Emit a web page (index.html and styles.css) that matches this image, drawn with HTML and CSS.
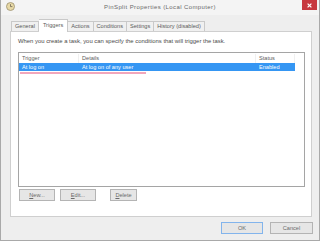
FILE: index.html
```html
<!DOCTYPE html>
<html>
    <head>
        <meta charset="utf-8">
        <link rel="stylesheet" href="styles.css">
    </head>
    <body>
        <div class="window">

            <div class="titleBar">
                <div class="appIcon">
                    <svg width="9" height="9" viewBox="0 0 9 9">
                        <circle cx="4.5" cy="4.5" r="4" fill="#e8d9a6" stroke="#9a8f70" stroke-width="0.8"/>
                        <path d="M4.5 2.2 V4.6 H6.4" fill="none" stroke="#6d6550" stroke-width="0.8"/>
                    </svg>
                </div>
                <div class="title">PinSplit Properties (Local Computer)</div>
                <div class="closeArea">
                    <div class="closeButton">
                        <svg width="5" height="5" viewBox="0 0 5 5">
                            <path d="M0.6 0.6 L4.4 4.4 M4.4 0.6 L0.6 4.4" stroke="#fff" stroke-width="1.2"/>
                        </svg>
                    </div>
                </div>
            </div>

            <div class="client">

                <div class="tabStrip">
                    <div class="tab tabFirst">General</div>
                    <div class="tab tabSelected">Triggers</div>
                    <div class="tab">Actions</div>
                    <div class="tab">Conditions</div>
                    <div class="tab">Settings</div>
                    <div class="tab">History (disabled)</div>
                </div>

                <div class="tabPage">

                    <p class="intro">When you create a task, you can specify the conditions that will trigger the task.</p>

                    <div class="listView">
                        <div class="listHeader">
                            <div class="headCell">Trigger</div>
                            <div class="headCell">Details</div>
                            <div class="headCell">Status</div>
                            <div class="headCell headFill"></div>
                        </div>
                        <div class="listRow rowSelected">
                            <div class="cell">At log on</div>
                            <div class="cell">At log on of any user</div>
                            <div class="cell">Enabled</div>
                        </div>
                        <div class="markUnderline"></div>
                    </div>

                    <div class="pageButtons">
                        <button class="button buttonNew"><u>N</u>ew...</button>
                        <button class="button buttonEdit"><u>E</u>dit...</button>
                        <button class="button buttonDelete"><u>D</u>elete</button>
                    </div>

                </div>

                <div class="dialogButtons">
                    <button class="button buttonDialog buttonDefault">OK</button>
                    <button class="button buttonDialog">Cancel</button>
                </div>

            </div>
        </div>
    </body>
</html>
```

FILE: styles.css
```css
html, body {
    margin: 0;
    padding: 0;
    background: #ffffff;
}

body {
    font-family: "Liberation Sans", Arial, sans-serif;
    font-size: 6px;
    color: #3c3c3c;
}

.window {
    box-sizing: border-box;
    width: 320px;
    height: 241px;
    border: 1px solid #a9a9a9;
    border-top: none;
    background: #eeeeee;
    display: flex;
    flex-direction: column;
}

.titleBar {
    height: 15px;
    display: grid;
    grid-template-columns: 24px 1fr 24px;
    background: #f4f4f4;
}

.appIcon {
    width: 9px;
    height: 9px;
    margin: 2px 0 0 5px;
}

.title {
    text-align: center;
    padding-top: 4px;
    font-size: 6px;
    letter-spacing: 0.4px;
    color: #6a6a6a;
    -webkit-font-smoothing: antialiased;
}

.closeArea {
    display: flex;
    justify-content: flex-end;
}

.closeButton {
    width: 15px;
    height: 10px;
    margin-right: 2px;
    background: #c7383f;
    display: flex;
    align-items: center;
    justify-content: center;
}

.client {
    flex: 1;
    display: flex;
    flex-direction: column;
    padding: 4px 7px 0 9px;
}

.tabStrip {
    display: flex;
    align-items: flex-end;
    height: 12px;
    padding-left: 1px;
}

.tab {
    height: 9px;
    line-height: 9px;
    padding: 0 3px;
    border: 1px solid #c9c9c9;
    border-bottom: none;
    border-left: none;
    background: #f0f0f0;
    color: #5a5a5a;
    font-size: 5.6px;
}

.tabFirst {
    border-left: 1px solid #c9c9c9;
}

.tabSelected {
    height: 12px;
    line-height: 10px;
    padding: 0 4px;
    margin-bottom: -1px;
    background: #ffffff;
    position: relative;
    z-index: 1;
}

.tabPage {
    height: 184px;
    border: 1px solid #cfcfcf;
    background: #ffffff;
    padding: 0 6px 0 7px;
    display: flex;
    flex-direction: column;
}

.intro {
    margin: 6px 0 0 0;
    height: 14px;
    font-size: 5.9px;
    color: #4a4a4a;
}

.listView {
    box-sizing: border-box;
    height: 135px;
    border: 1px solid #a5a5a5;
    background: #ffffff;
}

.listHeader {
    display: grid;
    grid-template-columns: 60px 177px 39px 1fr;
    height: 9px;
    margin-top: 1px;
}

.headCell {
    padding-left: 3px;
    line-height: 8px;
    color: #606060;
    font-size: 5.6px;
    border-right: 1px solid #f0f0f0;
}

.headFill {
    border-right: none;
}

.listRow {
    display: grid;
    grid-template-columns: 60px 177px 39px;
    width: 276px;
    height: 8px;
    line-height: 8px;
    font-size: 5.6px;
}

.cell {
    padding-left: 3px;
    white-space: nowrap;
}

.rowSelected {
    background: #3596f3;
    color: #ffffff;
}

.markUnderline {
    width: 126px;
    height: 2px;
    margin: 1px 0 0 1px;
    background: #f2a6bb;
}

.pageButtons {
    display: flex;
    margin-top: 2px;
    padding-left: 1px;
}

.button {
    box-sizing: border-box;
    height: 12px;
    padding: 0;
    border: 1px solid #b4b4b4;
    background: #e6e6e6;
    font-family: "Liberation Sans", Arial, sans-serif;
    font-size: 5.6px;
    color: #6a6a6a;
}

.buttonNew {
    width: 36px;
}

.buttonEdit {
    width: 36px;
    margin-left: 5px;
}

.buttonDelete {
    width: 27px;
    margin-left: 14px;
}

.dialogButtons {
    display: flex;
    justify-content: flex-end;
    margin-top: 5px;
    margin-right: -1px;
}

.buttonDialog {
    width: 43px;
    margin-left: 7px;
}

.buttonDefault {
    width: 42px;
    border-color: #82b4ec;
}
```
